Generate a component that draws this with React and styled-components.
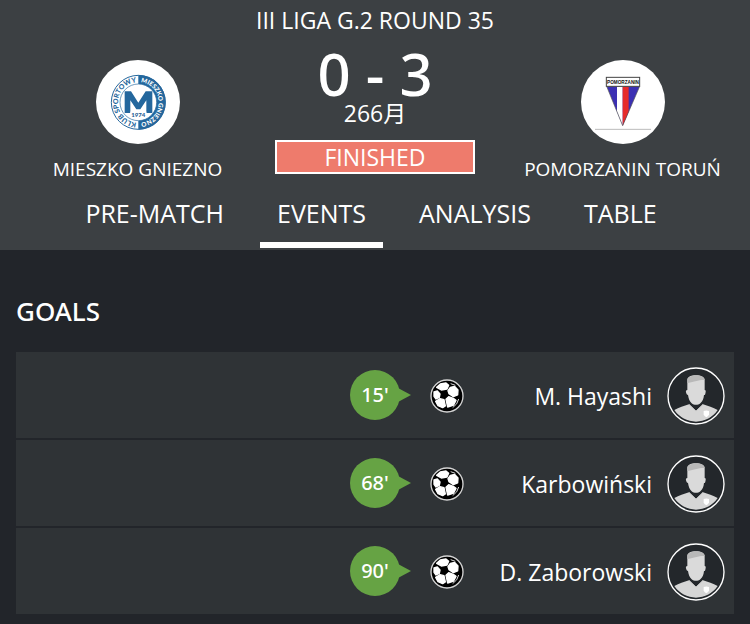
import { useState } from "react";
import styled, { createGlobalStyle } from "styled-components";

const tabs = ["PRE-MATCH", "EVENTS", "ANALYSIS", "TABLE"];

const goals = [
  { minute: 15, player: "M. Hayashi" },
  { minute: 68, player: "Karbowiński" },
  { minute: 90, player: "D. Zaborowski" },
];

const MieszkoLogo = () => (
  <svg viewBox="18 18 252 252" width="84" height="84" aria-hidden="true">
    <circle cx="145" cy="145" r="81" fill="#fff" stroke="#24679d" strokeWidth="3" />
    <path d="M145 63a82 82 0 0 1 0 164z" fill="#24679d" />
    <circle cx="145" cy="145" r="55" fill="#fff" stroke="#24679d" strokeWidth="2" />
    <path
      d="M104 177V112h19l22 34 22-34h20v65h-18v-38l-18 27h-12l-18-27v38z"
      fill="#24679d"
    />
    <rect x="121" y="173" width="48" height="18" fill="#fff" />
    <text
      x="145"
      y="189"
      textAnchor="middle"
      fontSize="18"
      fontWeight="900"
      fontFamily="Lato, sans-serif"
      fill="#1d5c92"
    >
      1974
    </text>
    <path id="ringLeft" d="M145 206a61 61 0 0 1 0 -122" fill="none" />
    <path id="ringRight" d="M145 84a61 61 0 0 1 0 122" fill="none" />
    <g fontSize="21" fontWeight="900" fontFamily="Lato, sans-serif" textAnchor="middle">
      <text fill="#24679d">
        <textPath href="#ringLeft" startOffset="50%">
          KLUB SPORTOWY
        </textPath>
      </text>
      <text fill="#fff" fontSize="19">
        <textPath href="#ringRight" startOffset="50%">
          MIESZKO GNIEZNO
        </textPath>
      </text>
    </g>
  </svg>
);

const PomorzaninLogo = () => (
  <svg viewBox="18 18 252 252" width="84" height="84" aria-hidden="true">
    <path d="M95 97h99l-51 118z" fill="#3b30b3" />
    <path d="M126 97h17v118l-17-42z" fill="#fff" />
    <path d="M143 97h18v76l-18 42z" fill="#e62b2b" />
    <path d="M95 97h99l-51 118z" fill="none" stroke="#555" strokeWidth="2" />
    <rect x="94" y="70" width="100" height="27" fill="#fff" stroke="#444" strokeWidth="3" />
    <text
      x="144"
      y="89"
      textAnchor="middle"
      fontSize="14"
      fontWeight="700"
      fontFamily="Liberation Sans, sans-serif"
      fill="#111"
    >
      POMORZANIN
    </text>
    <path d="M60 226h168" stroke="#bbb" strokeWidth="3" />
  </svg>
);

const SoccerBall = () => (
  <svg viewBox="0 0 102 102" width="34" height="34" aria-hidden="true">
    <circle cx="51" cy="51" r="48" fill="#000" stroke="#d4d4d4" strokeWidth="4" />
    <g fill="#fff" stroke="#fff" strokeWidth="4" strokeLinejoin="round">
      <path d="M20 25 31 15 48 12 56 19 51 30 34 33z" />
      <path d="M61 25 74 22 84 33 83 48 70 53 57 44 54 35z" />
      <path d="M12 39 22 36 30 45 28 55 18 60 12 52z" />
      <path d="M17 67 30 59 42 62 46 81 38 86 24 80z" />
      <path d="M48 61 56 53 70 58 78 64 71 78 53 84z" />
    </g>
    <path d="M62 14 76 19M86 60Q83 76 68 86" fill="none" stroke="#ddd" strokeWidth="3" />
  </svg>
);

const PlayerAvatar = () => (
  <svg viewBox="0 0 174 174" width="58" height="58" aria-hidden="true">
    <circle cx="87" cy="87" r="84" fill="#23272b" stroke="#fff" strokeWidth="4" />
    <path
      d="M22 129c14-8 29-12 44-17l21 20 21-20c15 5 30 9 44 17a78 78 0 0 1-130 0z"
      fill="#d6d6d6"
    />
    <path d="M66 112l21 20 21-20" fill="none" stroke="#c2c2c2" strokeWidth="3" />
    <path
      d="M61 38c0-9 13-13 26-13s26 5 26 14v30c4 0 4 4 2 11-1 4-2 4-4 4-1 12-5 19-11 25-7 6-19 6-26 0-6-6-9-13-11-25-3 0-5-3-6-8-1-5 1-7 4-7z"
      fill="#dadada"
    />
    <path
      d="M61 48V37c4-8 11-9 15-11 13-3 36-1 37 13-14-1-38 6-52 9z"
      fill="#b8b8b8"
    />
    <path d="M110 132q8-3 16 0v10q-1 6-8 9-7-3-8-9z" fill="#fff" />
  </svg>
);

const App = () => {
  const [activeTab, setActiveTab] = useState("EVENTS");

  return (
    <>
      <GlobalStyle />
      <Header>
        <RoundTitle>III LIGA G.2 ROUND 35</RoundTitle>
        <MatchInfo>
          <Team>
            <LogoCircle>
              <MieszkoLogo />
            </LogoCircle>
            <TeamName>MIESZKO GNIEZNO</TeamName>
          </Team>
          <ScoreBox>
            <Score>0 - 3</Score>
            <MatchDate>266月</MatchDate>
            <Status>FINISHED</Status>
          </ScoreBox>
          <Team $away>
            <LogoCircle>
              <PomorzaninLogo />
            </LogoCircle>
            <TeamName>POMORZANIN TORUŃ</TeamName>
          </Team>
        </MatchInfo>
        <TabBar>
          {tabs.map((tab) => (
            <TabButton
              key={tab}
              $active={tab === activeTab}
              onClick={() => setActiveTab(tab)}
            >
              {tab}
            </TabButton>
          ))}
        </TabBar>
      </Header>
      <Content>
        <SectionTitle>GOALS</SectionTitle>
        <GoalList>
          {goals.map((goal) => (
            <GoalRow key={goal.minute}>
              <Minute>{goal.minute}'</Minute>
              <PlayerBox>
                <SoccerBall />
                <PlayerName>{goal.player}</PlayerName>
                <PlayerAvatar />
              </PlayerBox>
            </GoalRow>
          ))}
        </GoalList>
      </Content>
    </>
  );
};

const GlobalStyle = createGlobalStyle`
  * {
    box-sizing: border-box;
  }

  body {
    margin: 0;
    background-color: #22252a;
    color: #ffffff;
    font-family: "Open Sans", "Noto Sans CJK JP", sans-serif;
  }

  svg {
    display: block;
    flex-shrink: 0;
  }
`;

const Header = styled.header`
  background-color: #3c4043;
`;

const RoundTitle = styled.h1`
  margin: 0;
  font-size: 23px;
  font-weight: 400;
  line-height: 40px;
  text-align: center;
`;

const MatchInfo = styled.div`
  display: grid;
  grid-template-columns: 1fr 200px 1fr;
`;

const Team = styled.div`
  display: flex;
  flex-direction: column;
  align-items: center;
  padding-top: 20px;
  padding-left: ${({ $away }) => ($away ? "20px" : "0")};
`;

const LogoCircle = styled.div`
  width: 84px;
  height: 84px;
  border-radius: 50%;
  overflow: hidden;
  background-color: #ffffff;
`;

const TeamName = styled.h2`
  margin: 10px 0 0;
  font-size: 19px;
  font-weight: 400;
  line-height: 30px;
  white-space: nowrap;
`;

const ScoreBox = styled.div`
  display: flex;
  flex-direction: column;
  text-align: center;
`;

const Score = styled.div`
  font-family: "Noto Sans", sans-serif;
  font-size: 58px;
  font-weight: 500;
  line-height: 60px;
  padding-top: 4px;
  height: 60px;
`;

const MatchDate = styled.div`
  font-size: 23px;
  line-height: 26px;
`;

const Status = styled.div`
  margin-top: 14px;
  border: 2px solid #ffffff;
  background-color: #ee7b6c;
  font-size: 23px;
  line-height: 30px;
`;

const TabBar = styled.nav`
  display: flex;
  justify-content: center;
  gap: 19px;
  padding: 6px 8px 2px 0;
`;

const TabButton = styled.button`
  height: 58px;
  padding: 0 17px 6px;
  border: 0;
  border-bottom: 6px solid
    ${({ $active }) => ($active ? "#ffffff" : "transparent")};
  background: none;
  color: inherit;
  font-family: inherit;
  font-size: 25px;
  line-height: 40px;
  cursor: pointer;
`;

const Content = styled.main`
  padding: 40px 16px 10px;
`;

const SectionTitle = styled.h2`
  margin: 0 0 20px;
  font-family: "Noto Sans", sans-serif;
  font-size: 26px;
  font-weight: 500;
  line-height: 42px;
`;

const GoalList = styled.ul`
  display: flex;
  flex-direction: column;
  gap: 2px;
  margin: 0;
  padding: 0;
  list-style: none;
`;

const GoalRow = styled.li`
  display: grid;
  grid-template-columns: 1fr 50px 1fr;
  align-items: center;
  height: 86px;
  background-color: #2f3336;
`;

const Minute = styled.div`
  position: relative;
  grid-column: 2;
  border-radius: 50%;
  background-color: #66a344;
  font-family: "Noto Sans", sans-serif;
  font-size: 20px;
  font-weight: 500;
  line-height: 50px;
  text-align: center;

  &::after {
    content: "";
    position: absolute;
    top: 18px;
    left: 48px;
    border-left: 13px solid #66a344;
    border-top: 7px solid transparent;
    border-bottom: 7px solid transparent;
  }
`;

const PlayerBox = styled.div`
  display: flex;
  align-items: center;
  gap: 15px;
  padding: 2px 9px 0 30px;
`;

const PlayerName = styled.div`
  flex: 1;
  font-size: 23px;
  line-height: 32px;
  text-align: right;
`;

export default App;
